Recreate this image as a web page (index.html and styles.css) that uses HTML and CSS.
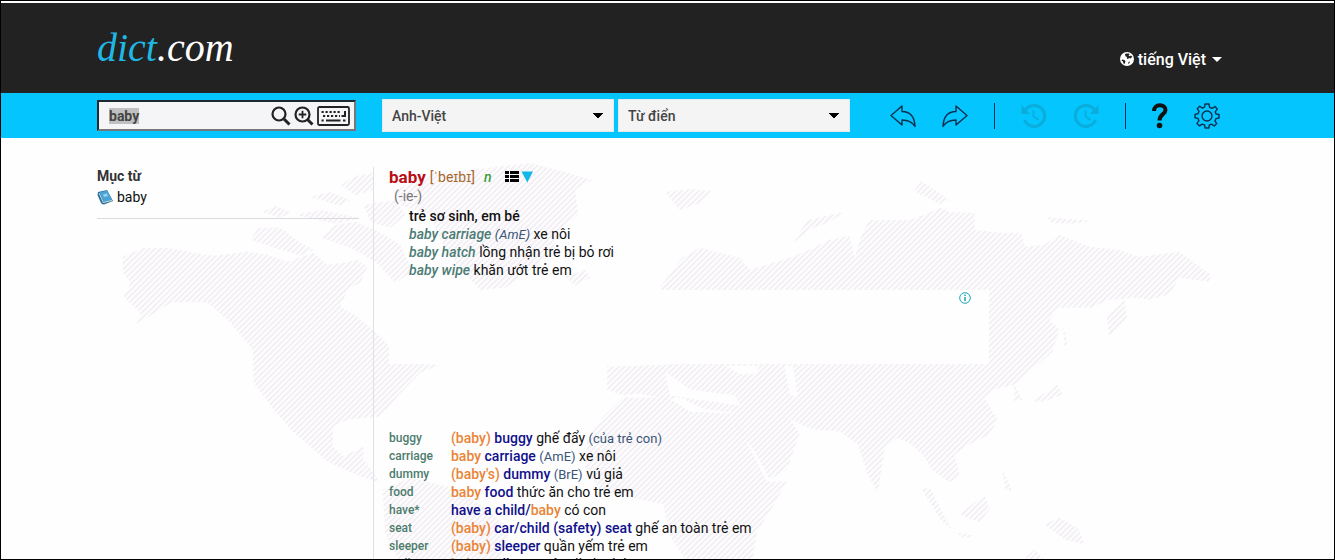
FILE: index.html
```html
<!DOCTYPE html>
<html lang="vi">
<head>
    <meta charset="UTF-8">
    <meta name="viewport" content="width=device-width, initial-scale=1.0">
    <title>baby - dict.com</title>
    <link rel="stylesheet" href="styles.css">
</head>
<body>
    <div class="page">
        <header class="header">
            <a class="logo" href="#"><span class="logo-dict">dict</span>.com</a>
            <button class="lang-button" type="button">
                <svg width="14" height="14" viewBox="0 0 14 14" aria-hidden="true">
                    <circle cx="7" cy="7" r="7" fill="#fff"/>
                    <path d="M6 1.500L9 1.500L9.500 2.500L8.500 3.200L9.500 4.200L11 3.500L12.300 4.800L10.500 6.500L9 6L8 7L6.800 6.500L7 5L5.500 4.200L5 2.500Z" fill="#222"/>
                    <path d="M2 7.500L4.500 8L5.500 9.500L4.500 12L3.500 11.500L3 9.500L1.500 8.500Z" fill="#222"/>
                    <path d="M8.500 10L10 9.500L9.500 11L8 12Z" fill="#222"/>
                </svg>
                tiếng Việt
                <span class="caret"></span>
            </button>
        </header>

        <div class="toolbar">
            <form class="search-form">
                <div class="search-box">
                    <input type="text" id="search" class="search-input" value="baby" aria-label="Tìm kiếm">
                    <button type="submit" class="icon-button" aria-label="Tìm">
                        <svg width="20" height="20" viewBox="0 0 20 20" fill="none" stroke="#222">
                            <circle cx="8" cy="8" r="6.500" stroke-width="2.200"/>
                            <path d="M13 13L18.500 18.500" stroke-width="3"/>
                        </svg>
                    </button>
                    <button type="button" class="icon-button" aria-label="Tìm toàn văn">
                        <svg width="20" height="20" viewBox="0 0 20 20" fill="none" stroke="#222">
                            <circle cx="8.500" cy="8.500" r="7" stroke-width="2.200"/>
                            <path d="M13.500 13.500L18.500 18.500" stroke-width="3"/>
                            <path d="M8.500 4.700V12.300M4.700 8.500H12.300" stroke-width="1.800"/>
                        </svg>
                    </button>
                    <button type="button" class="icon-button" aria-label="Bàn phím">
                        <svg width="33" height="20" viewBox="0 0 33 20" fill="none" stroke="#222">
                            <rect x="1" y="1" width="31" height="18" rx="1.500" stroke-width="1.800"/>
                            <path d="M4.500 6H24.500M6 10H23" stroke-width="2.200" stroke-dasharray="2.200 1.800"/>
                            <path d="M28 5V10H24.500" stroke-width="2"/>
                            <path d="M4.500 14.500H6.700M9 14.500H23.500M26 14.500H28.500" stroke-width="2"/>
                        </svg>
                    </button>
                </div>
                <select class="select" aria-label="Ngôn ngữ">
                    <option>Anh-Việt</option>
                </select>
                <select class="select" aria-label="Loại">
                    <option>Từ điển</option>
                </select>
            </form>
            <div class="tools">
                <button type="button" class="icon-button" aria-label="Quay lại">
                    <svg width="26" height="24" viewBox="0 0 26 24" fill="none" stroke="#0d3050" stroke-width="1.400" stroke-linejoin="round">
                        <path d="M1 11.500L12 2V7.500C20 7.500 24.500 12 25 22.500C22 17.500 18 16 12 16V21Z"/>
                    </svg>
                </button>
                <button type="button" class="icon-button" aria-label="Tiếp">
                    <svg width="26" height="24" viewBox="0 0 26 24" fill="none" stroke="#0d3050" stroke-width="1.400" stroke-linejoin="round">
                        <path d="M25 11.500L14 2V7.500C6 7.500 1.500 12 1 22.500C4 17.500 8 16 14 16V21Z"/>
                    </svg>
                </button>
                <span class="divider"></span>
                <button type="button" class="icon-button" aria-label="Lịch sử trước" disabled>
                    <svg width="26" height="26" viewBox="0 0 26 26" fill="none" stroke="#0aaddb">
                        <path d="M4.500 7A10.500 10.500 0 1 1 3.500 17" stroke-width="3"/>
                        <path d="M0.500 2V11H9Z" fill="#0aaddb" stroke="none"/>
                        <path d="M12.500 7V13.500L17.500 17" stroke-width="1.800"/>
                    </svg>
                </button>
                <button type="button" class="icon-button" aria-label="Lịch sử sau" disabled>
                    <svg width="26" height="26" viewBox="0 0 26 26" fill="none" stroke="#0aaddb">
                        <path d="M21.500 7A10.500 10.500 0 1 0 22.500 17" stroke-width="3"/>
                        <path d="M25.500 2V11H17Z" fill="#0aaddb" stroke="none"/>
                        <path d="M12.500 7V13.500L17.500 17" stroke-width="1.800"/>
                    </svg>
                </button>
                <span class="divider"></span>
                <button type="button" class="icon-button" aria-label="Trợ giúp">
                    <svg width="16" height="26" viewBox="0 0 16 26" fill="none" stroke="#111">
                        <path d="M2 8C2 0.500 13.500 0.500 13.500 7C13.500 11.500 7.500 11 7.500 17.500" stroke-width="4"/>
                        <circle cx="7.500" cy="22.500" r="2.800" fill="#111" stroke="none"/>
                    </svg>
                </button>
                <button type="button" class="icon-button" aria-label="Cài đặt">
                    <svg width="26" height="26" viewBox="0 0 26 26" fill="none" stroke="#0d3050" stroke-width="1.400" stroke-linejoin="round">
                        <path d="M11 1H15L15.600 4.300L18.200 5.400L21 3.500L23.300 6L21.200 8.800L22 11L25 11.500V15L22 15.600L21 18L22.800 20.600L20.300 23L17.600 21.200L15.400 22L14.800 25H11.200L10.600 22L8.200 21.100L5.600 22.900L3 20.400L4.900 17.600L4 15.400L1 14.800V11.400L4 10.800L5 8.400L3.200 5.700L5.700 3.200L8.400 5.100L10.500 4.200Z"/>
                        <circle cx="13" cy="13" r="5"/>
                    </svg>
                </button>
            </div>
        </div>

        <main class="main">
            <!-- hatched world map behind the content -->
            <svg class="map" viewBox="0 138 1335 422" preserveAspectRatio="xMidYMin slice" aria-hidden="true">
                <defs>
                    <pattern id="hatch" width="4" height="4" patternUnits="userSpaceOnUse" patternTransform="rotate(45)">
                        <rect width="2" height="4" fill="#f3eff4"/>
                    </pattern>
                </defs>
                <g fill="url(#hatch)">
                    <path d="M122 257L143 248L167 248L193 253L213 256L247 252L267 255L287 262L313 253L327 265L343 263L357 260L367 267L360 283L347 290L340 307L357 317L380 337L392 350L390 363L440 365L420 373L397 397L380 417L347 420L333 427L332 447L343 457L363 447L363 460L380 483L360 477L327 462L313 450L293 433L273 410L253 383L252 350L230 323L207 303L190 302L170 303L143 320L134 324L140 314L123 297L130 283L122 273Z"/>
                    <path d="M250 240L257 228L280 228L300 243L313 250L300 256L280 250ZM262 212L275 206L290 212L280 218ZM295 215L320 210L360 218L335 224ZM320 238L335 225L355 222L375 230L400 245L412 272L395 283L375 262L350 248ZM340 185L355 176L373 173V190L355 195ZM310 197L330 192L350 200L340 206ZM363 205L395 200L405 215L390 228L370 222Z"/>
                    <path d="M395 190L430 174L470 170L530 163L565 172L592 180L575 190L578 215L560 230L550 255L530 270L505 288L480 290L460 270L440 240L430 215L400 205Z"/>
                    <path d="M565 277L585 270L590 278L575 286ZM665 192L690 189L712 191L700 203L680 210Z"/>
                    <path d="M658 290L682 258L700 248L740 258L750 270L790 258L805 252L830 240L850 236L855 258L862 235L870 220L910 220L930 213L940 207L950 212L975 213L975 230L1000 233L1022 233L1025 247L1045 245L1060 235L1090 247L1120 250L1140 257L1180 252L1212 275L1210 282L1180 278L1170 295L1150 300L1138 298L1110 300L1092 308L1060 308L1050 320L1060 330L1053 352L1035 368L1015 385L995 390L985 398L998 420L990 435L970 445L955 455L960 475L950 483L932 470L925 458L912 445L898 438L885 450L878 493L868 475L858 445L840 432L812 430L790 420L800 434L787 470L770 480L755 452L735 427L733 413L705 410L680 398L667 400L640 394L623 396L607 390L607 367L667 365L658 340Z"/>
                    <path d="M603 417L623 398L668 398L690 412L733 414L747 443L767 482L787 482L773 507L757 533L753 560H685L670 537L663 505L640 500L600 490L585 470L587 440Z"/>
                    <path d="M382 490L410 478L450 488L480 505L510 530L500 560H398L385 535Z"/>
                    <path d="M1107 315L1125 300L1128 318L1110 336ZM1033 402L1058 385L1063 395L1045 402ZM1015 385L1023 400L1015 402ZM1064 326L1068 345L1065 347ZM960 515L985 495L990 510L980 523ZM922 490L930 488L952 530L942 522ZM955 533L975 536L965 539ZM1045 525L1060 518L1080 530L1085 545L1065 540ZM1002 468L1013 492L1006 490ZM1025 560L1035 550L1045 560ZM793 243L808 220L845 212L830 222L810 230ZM914 191L922 181L950 200L940 204ZM1048 217L1092 221L1075 224L1052 223Z"/>
                </g>
                <path fill="#fefeff" d="M725 366L760 366L755 374L740 374ZM665 372L690 390L735 396L740 406L670 396ZM785 366L793 366L798 398L790 395Z"/>
            </svg>

            <aside class="sidebar">
                <h2 class="sidebar-title">Mục từ</h2>
                <a class="sidebar-link" href="#">
                    <svg width="16" height="16" viewBox="0 0 16 16" aria-hidden="true">
                        <path d="M1 3L10 1L16 12L7 15.500Q4.500 15.500 3.500 13L0.500 6Z" fill="#2b6f9f"/>
                        <path d="M2.500 3.500L10 1.500L15 11L7 13.500Z" fill="#4aa3d8"/>
                        <path d="M6.500 13.500L15 11.500M2 4L6.500 14" stroke="#c8dccb" stroke-width="1" fill="none"/>
                        <path d="M6 5.500L10 4.500L11 7L7 8Z" fill="#9bd0ee"/>
                    </svg>
                    baby
                </a>
            </aside>

            <article class="content">
                <div class="headword-row">
                    <h1 class="headword">baby</h1>
                    <span class="phonetic">[ˈbeɪbɪ]</span>
                    <i class="pos">n</i>
                    <button type="button" class="icon-button list-button" aria-label="Mục lục">
                        <svg width="28" height="12" viewBox="0 0 28 12">
                            <path d="M0 0H4V3H0ZM5 0H14V3H5ZM0 4H4V7H0ZM5 4H14V7H5ZM0 8H4V11H0ZM5 8H14V11H5Z" fill="#000"/>
                            <path d="M16.500 0.500H28L22.300 11.500Z" fill="#12b8e8"/>
                        </svg>
                    </button>
                </div>
                <p class="forms">(-ie-)</p>
                <div class="meanings">
                    <p><b>trẻ sơ sinh, em bé</b></p>
                    <p><i class="example">baby carriage</i> <i class="note">(AmE)</i> xe nôi</p>
                    <p><i class="example">baby hatch</i> lồng nhận trẻ bị bỏ rơi</p>
                    <p><i class="example">baby wipe</i> khăn ướt trẻ em</p>
                </div>

                <div class="ad">
                    <svg width="12" height="12" viewBox="0 0 12 12" fill="none" stroke="#1ba5bb" aria-hidden="true">
                        <circle cx="6" cy="6" r="5.300"/>
                        <path d="M6 5V9M6 2.500V4" stroke-width="1.500"/>
                    </svg>
                </div>

                <table class="entries">
                    <tr><th scope="row">buggy</th><td><a href="#"><em>(baby)</em> buggy</a> ghế đẩy <span class="note">(của trẻ con)</span></td></tr>
                    <tr><th scope="row">carriage</th><td><a href="#"><em>baby</em> carriage</a> <span class="note">(AmE)</span> xe nôi</td></tr>
                    <tr><th scope="row">dummy</th><td><a href="#"><em>(baby's)</em> dummy</a> <span class="note">(BrE)</span> vú giả</td></tr>
                    <tr><th scope="row">food</th><td><a href="#"><em>baby</em> food</a> thức ăn cho trẻ em</td></tr>
                    <tr><th scope="row">have*</th><td><a href="#">have a child/<em>baby</em></a> có con</td></tr>
                    <tr><th scope="row">seat</th><td><a href="#"><em>(baby)</em> car/child (safety) seat</a> ghế an toàn trẻ em</td></tr>
                    <tr><th scope="row">sleeper</th><td><a href="#"><em>(baby)</em> sleeper</a> quần yếm trẻ em</td></tr>
                    <tr><th scope="row">walker</th><td><a href="#"><em>baby</em> walker</a> xe tập đi cho bé</td></tr>
                </table>
            </article>
        </main>
    </div>

    <script>
        var search = document.getElementById("search");
        search.focus();
        search.select();
    </script>
</body>
</html>
```
FILE: styles.css
```css
* {
    box-sizing: border-box;
}
body {
    margin: 0;
    font-family: Roboto, "Liberation Sans", sans-serif;
    font-size: 14px;
    line-height: 18px;
    color: #111;
    background-color: #fefeff;
}
h1, h2, p {
    margin: 0;
}
a {
    text-decoration: none;
}
.page {
    height: 100vh;
    overflow: hidden;
    display: flex;
    flex-direction: column;
    border: 1px solid #000;
    padding-top: 2px;
}
.header, .toolbar, .main {
    padding: 0 112px 0 96px;
    flex-shrink: 0;
}
.header {
    height: 90px;
    display: flex;
    justify-content: space-between;
    align-items: center;
    background-color: #222;
}
.logo {
    font-family: "Liberation Serif", serif;
    font-style: italic;
    font-size: 40px;
    line-height: 48px;
    color: #fff;
}
.logo-dict {
    color: #1fb8e4;
}
.lang-button {
    display: flex;
    align-items: center;
    gap: 4px;
    margin-top: 22px;
    padding: 0;
    border: none;
    background: none;
    color: #fff;
    font-family: inherit;
    font-size: 16px;
    font-weight: 500;
    cursor: pointer;
}
.caret {
    margin-left: 2px;
    border: 5px solid transparent;
    border-top-color: #fff;
    border-bottom: none;
}
.toolbar {
    height: 45px;
    display: flex;
    align-items: center;
    justify-content: space-between;
    background-color: #04c5fd;
}
.search-form {
    display: flex;
    align-items: center;
    gap: 4px;
}
.search-box {
    display: flex;
    align-items: center;
    gap: 3px;
    width: 259px;
    height: 31px;
    margin-right: 22px;
    padding: 0 4px 0 10px;
    background-color: #f5f5f7;
    border: 2px solid #1c2a30;
    border-right-color: #777;
    border-bottom-color: #777;
}
.search-input {
    flex: 1;
    min-width: 0;
    padding: 0;
    border: none;
    outline: none;
    background: none;
    font-family: inherit;
    font-size: 14px;
    font-weight: 700;
    color: #444;
}
.search-input::selection {
    background-color: #c0c0c0;
    color: #444;
}
.icon-button {
    display: flex;
    padding: 0;
    border: none;
    background: none;
    cursor: pointer;
}
.select {
    width: 232px;
    height: 33px;
    padding: 0 9px;
    border: 1px solid #e4e9ec;
    border-radius: 0;
    appearance: none;
    background-color: #f4f4f4;
    background-image: linear-gradient(to bottom left, #000 50%, transparent 51%), linear-gradient(to bottom right, #000 50%, transparent 51%);
    background-size: 5px 5px;
    background-repeat: no-repeat;
    background-position: right 15px center, right 10px center;
    font-family: inherit;
    font-size: 14px;
    font-weight: 500;
    color: #444;
}
.tools {
    display: flex;
    align-items: center;
    gap: 26px;
    padding-right: 2px;
}
.divider {
    width: 1px;
    height: 26px;
    background-color: #0d3050;
}
.main {
    position: relative;
    flex: 1;
    display: flex;
    padding-top: 29px;
}
.map {
    position: absolute;
    top: 0;
    left: 0;
    width: 100%;
}
.sidebar, .content {
    position: relative;
}
.sidebar {
    width: 262px;
    height: 52px;
    border-bottom: 1px solid #dcdae0;
}
.sidebar-title {
    font-size: 14px;
    line-height: 18px;
    font-weight: 700;
    color: #333;
}
.sidebar-link {
    display: flex;
    align-items: center;
    gap: 4px;
    line-height: 24px;
    color: #111;
}
.content {
    flex: 1;
    margin-left: 14px;
    padding-left: 15px;
    border-left: 1px solid #e2e0e6;
}
.headword-row {
    display: flex;
    align-items: center;
    line-height: 20px;
}
.headword {
    font-size: 17px;
    font-weight: 700;
    color: #b90e16;
}
.phonetic {
    margin-left: 4px;
    color: #a8682c;
}
.pos {
    margin-left: 9px;
    font-weight: 500;
    color: #3c9f3c;
}
.list-button {
    margin-left: 14px;
}
.forms {
    padding-left: 5px;
    color: #777;
}
.meanings {
    padding: 2px 0 0 20px;
}
.meanings b {
    font-weight: 500;
}
.example {
    font-weight: 500;
    color: #4c7c74;
}
.note {
    font-size: 13px;
    line-height: 14px;
    color: #3a5577;
}
.ad {
    display: flex;
    justify-content: flex-end;
    align-items: flex-start;
    max-width: 600px;
    height: 74px;
    margin: 11px 0 65px;
    padding: 2px 18px;
    background-color: #fefeff;
}
.entries {
    border-collapse: collapse;
}
.entries th, .entries td {
    height: 18px;
    padding: 0;
    text-align: left;
    vertical-align: top;
    white-space: nowrap;
}
.entries th {
    min-width: 62px;
    font-size: 12px;
    font-weight: 500;
    color: #4c7c6c;
}
.entries a {
    font-weight: 500;
    color: #10108a;
}
.entries em {
    font-style: normal;
    color: #ea8436;
}
```
